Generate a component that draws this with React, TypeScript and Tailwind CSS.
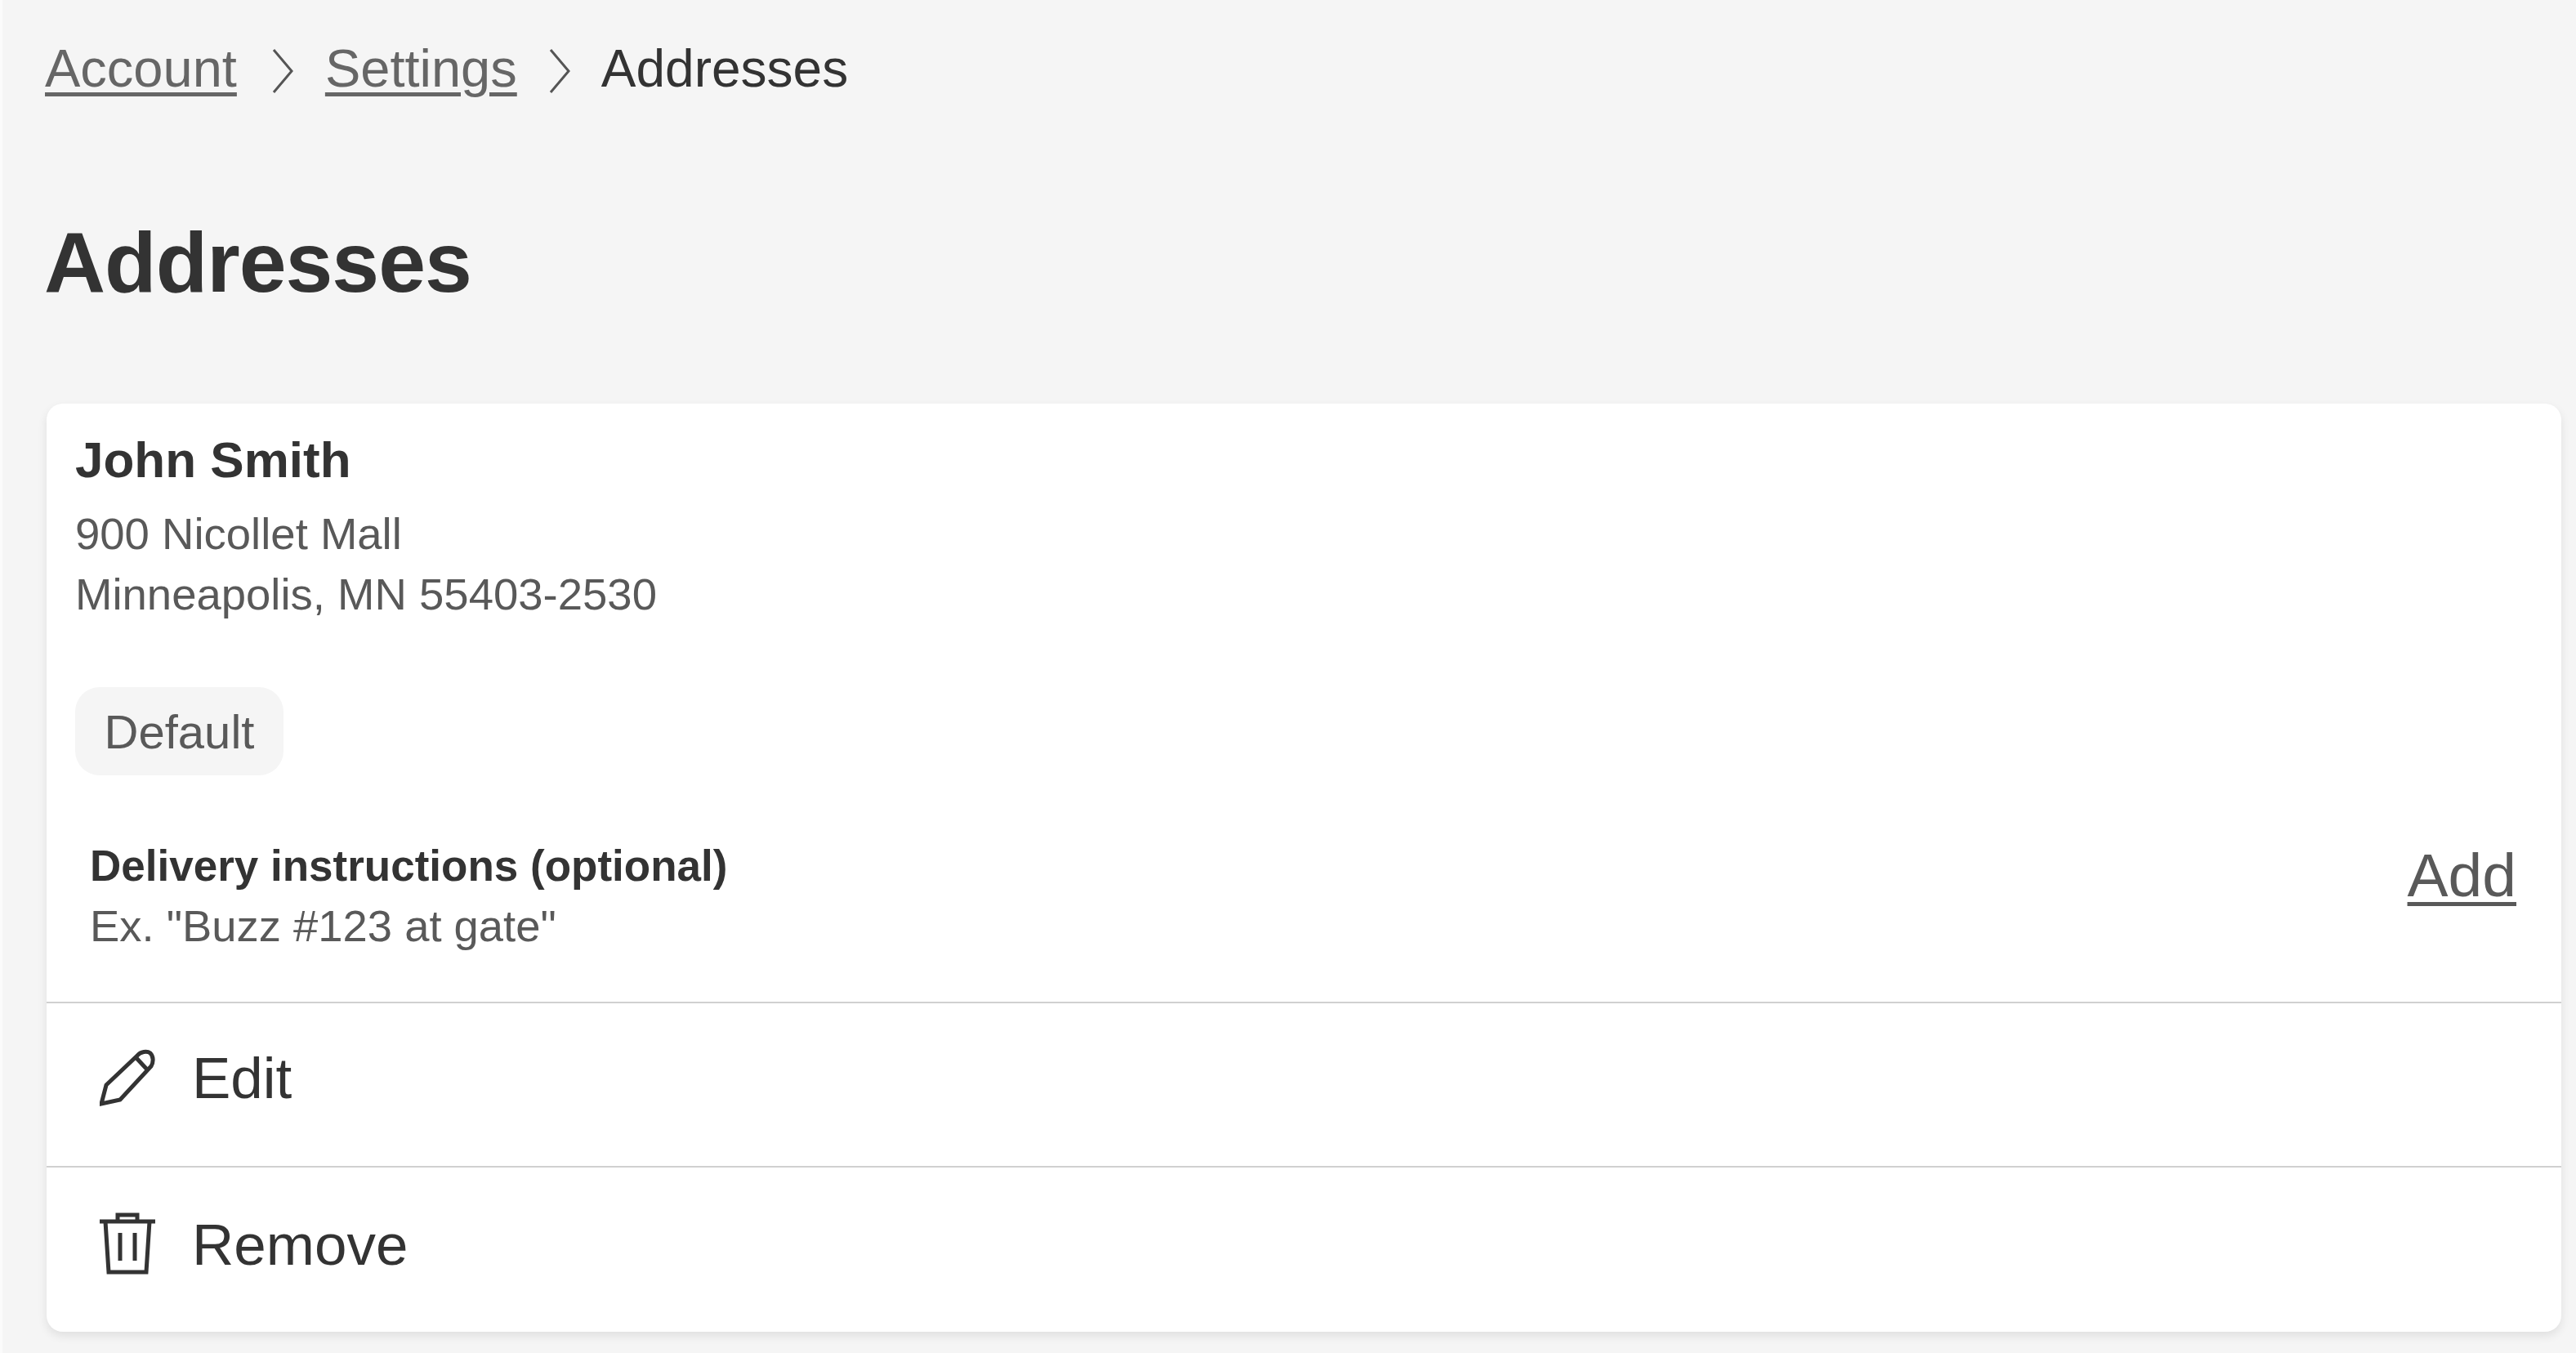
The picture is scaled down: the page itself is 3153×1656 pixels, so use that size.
import React from 'react';

function Chevron() {
  return (
    <svg width="26" height="54" viewBox="0 0 26 54" fill="none" className="shrink-0">
      <path d="M2 1 L24 27 L2 53" stroke="#555555" strokeWidth="3" />
    </svg>
  );
}

function PencilIcon() {
  return (
    <svg width="70" height="70" viewBox="0 0 70 70" fill="none" stroke="#333333" strokeWidth="5">
      <path d="M2 67 L8 44 L46 8 C50 3 58 2 62 5 C66 9 66 16 63 21 L25 62 Z" />
      <path d="M45 11 L58 25" />
    </svg>
  );
}

function TrashIcon() {
  return (
    <svg width="70" height="78" viewBox="0 0 70 78" fill="none" stroke="#333333" strokeWidth="5">
      <path d="M0 11 H68" />
      <path d="M22 11 V3 H46 V11" />
      <path d="M7 11 L11 73 H57 L61 11" />
      <path d="M25 25 V59" />
      <path d="M43 25 V59" />
    </svg>
  );
}

export default function App() {
  return (
    <div className="min-h-screen bg-[#f5f5f5] border-l-[3px] border-[#fbfbfb] pl-[54px] pr-[18px] pt-[47px] font-['Liberation_Sans',sans-serif] text-[#333333]">
      <nav className="-ml-[2px] flex items-center text-[65px] leading-[74px]">
        <a className="text-[#666666] underline decoration-[5px] underline-offset-[7px]">Account</a>
        <span className="ml-[43px] mr-[39px] mt-[6px] flex"><Chevron /></span>
        <a className="text-[#666666] underline decoration-[5px] underline-offset-[7px]">Settings</a>
        <span className="ml-[39px] mr-[38px] mt-[6px] flex"><Chevron /></span>
        <span className="text-[64px]">Addresses</span>
      </nav>

      <h1 className="-ml-[3px] mt-[144px] mb-[117px] text-[104px] leading-[112px] font-bold tracking-[-1px]">Addresses</h1>

      <div className="bg-white rounded-[20px] shadow-[0_5px_12px_rgba(0,0,0,0.09)]">
        <div className="pt-[34px] pb-[55px]">
          <div className="px-[35px]">
            <h2 className="text-[62px] leading-[70px] font-bold">John Smith</h2>
            <div className="mt-[19px] text-[54.5px] leading-[74px] text-[#595959]">
              <p>900 Nicollet Mall</p>
              <p>Minneapolis, MN 55403-2530</p>
            </div>
            <span className="mt-[76px] flex items-center justify-center w-[255px] h-[108px] rounded-[30px] bg-[#f5f5f5] text-[58px] text-[#595959]">Default</span>
          </div>
          <div className="mt-[74px] pl-[53px] pr-[55px] flex justify-between items-start">
            <div>
              <h3 className="text-[53px] leading-[74px] font-bold">Delivery instructions (optional)</h3>
              <p className="text-[54.4px] leading-[74px] text-[#595959]">Ex. "Buzz #123 at gate"</p>
            </div>
            <a className="mt-[8px] text-[75px] leading-[80px] text-[#595959] underline decoration-[5px] underline-offset-[7px]">Add</a>
          </div>
        </div>

        <div className="flex items-start h-[201px] border-t-2 border-[#d0d0d0] pl-[65px] pt-[52px] text-[71px] leading-[80px]">
          <span className="mt-[4px] w-[113px] shrink-0"><PencilIcon /></span>
          <span>Edit</span>
        </div>
        <div className="flex items-start h-[203px] border-t-2 border-[#d0d0d0] pl-[65px] pt-[55px] text-[71px] leading-[80px]">
          <span className="w-[113px] shrink-0"><TrashIcon /></span>
          <span>Remove</span>
        </div>
      </div>
    </div>
  );
}
